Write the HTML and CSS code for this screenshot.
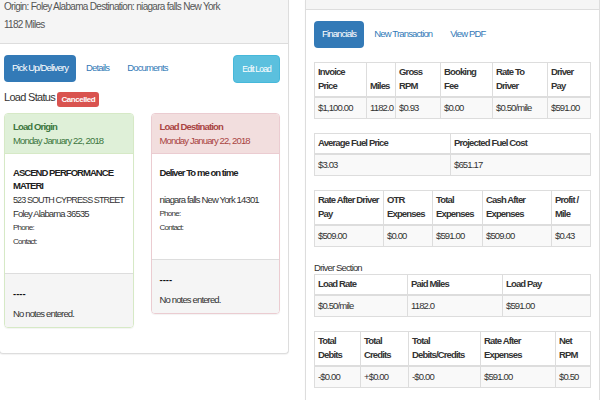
FILE: index.html
```html
<!DOCTYPE html>
<html lang="en">
<head>
<meta charset="utf-8">
<title>Load</title>
<link rel="stylesheet" href="styles.css">
</head>
<body>
<div class="page">
  <section class="panel load-panel">
    <div class="route">
      <p>Origin: Foley Alabama Destination: niagara falls New York</p>
      <p>1182 Miles</p>
    </div>
    <div class="load-body">
      <div class="toolbar">
        <ul class="pills">
          <li class="active"><a href="#">Pick Up/Delivery</a></li>
          <li><a href="#">Details</a></li>
          <li><a href="#">Documents</a></li>
        </ul>
        <button class="btn-edit" type="button">Edit Load</button>
      </div>
      <h4 class="status">Load Status <span class="badge">Cancelled</span></h4>
      <div class="stops">
        <div class="stop stop-origin">
          <div class="stop-heading">
            <strong>Load Origin</strong>
            <div>Monday January 22, 2018</div>
          </div>
          <div class="stop-body">
            <p class="stop-name">ASCEND PERFORMANCE MATERI</p>
            <p class="addr addr-caps">523 SOUTH CYPRESS STREET</p>
            <p class="addr">Foley Alabama 36535</p>
            <p class="small">Phone:</p>
            <p class="small">Contact:</p>
          </div>
          <div class="stop-footer">
            <p class="dashes">----</p>
            <p>No notes entered.</p>
          </div>
        </div>
        <div class="stop stop-dest">
          <div class="stop-heading">
            <strong>Load Destination</strong>
            <div>Monday January 22, 2018</div>
          </div>
          <div class="stop-body">
            <p class="stop-name">Deliver To me on time</p>
            <p class="addr">niagara falls New York 14301</p>
            <p class="small">Phone:</p>
            <p class="small">Contact:</p>
          </div>
          <div class="stop-footer">
            <p class="dashes">----</p>
            <p>No notes entered.</p>
          </div>
        </div>
      </div>
    </div>
  </section>

  <section class="panel fin-panel">
    <div class="fin-heading"></div>
    <div class="fin-body">
      <ul class="pills fin-pills">
        <li class="active"><a href="#">Financials</a></li>
        <li><a href="#">New Transaction</a></li>
        <li><a href="#">View PDF</a></li>
      </ul>

      <table class="grid">
        <colgroup><col class="w52"><col class="w29"><col class="w45"><col class="w52"><col class="w55"><col></colgroup>
        <thead><tr><th>Invoice Price</th><th>Miles</th><th>Gross RPM</th><th>Booking Fee</th><th>Rate To Driver</th><th>Driver Pay</th></tr></thead>
        <tbody><tr><td>$1,100.00</td><td>1182.0</td><td>$0.93</td><td>$0.00</td><td>$0.50/mile</td><td>$591.00</td></tr></tbody>
      </table>

      <table class="grid">
        <colgroup><col class="w136"><col></colgroup>
        <thead><tr><th>Average Fuel Price</th><th>Projected Fuel Cost</th></tr></thead>
        <tbody><tr><td>$3.03</td><td>$651.17</td></tr></tbody>
      </table>

      <table class="grid">
        <colgroup><col class="w69"><col class="w49"><col class="w50"><col class="w69"><col></colgroup>
        <thead><tr><th>Rate After Driver Pay</th><th>OTR Expenses</th><th>Total Expenses</th><th>Cash After Expenses</th><th>Profit / Mile</th></tr></thead>
        <tbody><tr><td>$509.00</td><td>$0.00</td><td>$591.00</td><td>$509.00</td><td>$0.43</td></tr></tbody>
      </table>

      <p class="section-label">Driver Section</p>
      <table class="grid">
        <colgroup><col class="w93"><col class="w95"><col></colgroup>
        <thead><tr><th>Load Rate</th><th>Paid Miles</th><th>Load Pay</th></tr></thead>
        <tbody><tr><td>$0.50/mile</td><td>1182.0</td><td>$591.00</td></tr></tbody>
      </table>

      <table class="grid">
        <colgroup><col class="w46"><col class="w48"><col class="w72"><col class="w75"><col></colgroup>
        <thead><tr><th>Total Debits</th><th>Total Credits</th><th>Total Debits/Credits</th><th>Rate After Expenses</th><th>Net RPM</th></tr></thead>
        <tbody><tr><td>-$0.00</td><td>+$0.00</td><td>-$0.00</td><td>$591.00</td><td>$0.50</td></tr></tbody>
      </table>
    </div>
  </section>
</div>
</body>
</html>
```

FILE: styles.css
```css
* { box-sizing: border-box; }
html, body { margin: 0; padding: 0; }
body {
  font-family: "Liberation Sans", Arial, sans-serif;
  font-size: 9.5px;
  line-height: 14px;
  letter-spacing: -0.85px;
  color: #333;
  background: #fff;
  overflow: hidden;
}
p { margin: 0; }

.page {
  display: flex;
  align-items: flex-start;
  gap: 16px;
  height: 400px;
  overflow: hidden;
}

.panel {
  background: #fff;
  border: 1px solid #ddd;
  border-top: none;
  box-shadow: 0 1px 1px rgba(0, 0, 0, 0.05);
}

/* left panel */
.load-panel {
  flex: none;
  width: 290px;
  margin-left: -1px;
  border-radius: 0 0 4px 4px;
}
.route {
  height: 46px;
  padding: 0 4px;
  background: #f5f5f5;
  border-bottom: 1px solid #ddd;
  color: #555;
  font-size: 10px;
  letter-spacing: -0.7px;
}
.route p { line-height: 18px; }
.route p:first-child { margin-top: -2px; }

.load-body { padding: 11px 8px 25px 4px; }

.toolbar {
  display: flex;
  justify-content: space-between;
  align-items: flex-start;
}
.pills {
  list-style: none;
  margin: 0;
  padding: 0;
  display: flex;
  gap: 2px;
}
.pills a {
  display: block;
  padding: 6px 8px 7px;
  line-height: 14px;
  border-radius: 4px;
  color: #337ab7;
  text-decoration: none;
}
.pills .active a { background: #337ab7; color: #fff; }

.btn-edit {
  font-family: inherit;
  font-size: 8.5px;
  letter-spacing: -0.8px;
  line-height: 14px;
  padding: 6px 8px;
  border: 1px solid #46b8da;
  background: #5bc0de;
  color: #fff;
  border-radius: 4px;
}

.status {
  margin: 6px 0 6px;
  font-size: 11px;
  line-height: 17px;
  font-weight: normal;
  letter-spacing: -0.7px;
}
.badge {
  display: inline-block;
  font-size: 8px;
  font-weight: bold;
  line-height: 11px;
  padding: 2px 4px;
  letter-spacing: -0.45px;
  background: #d9534f;
  color: #fff;
  border-radius: 3px;
  vertical-align: -1px;
}

.stops {
  display: grid;
  grid-template-columns: 1fr 1fr;
  column-gap: 17px;
  align-items: start;
}
.stop {
  border: 1px solid #ddd;
  border-radius: 4px;
  overflow: hidden;
  box-shadow: 0 1px 1px rgba(0, 0, 0, 0.05);
}
.stop-heading {
  padding: 6px 8px 5px;
  border-bottom: 1px solid transparent;
}
.stop-origin { border-color: #d6e9c6; }
.stop-origin .stop-heading { background: #dff0d8; color: #3c763d; border-bottom-color: #d6e9c6; }
.stop-dest { border-color: #ebccd1; }
.stop-dest .stop-heading { background: #f2dede; color: #a94442; border-bottom-color: #ebccd1; }

.stop-body { padding: 12px 8px 24px; }
.stop-name {
  min-height: 27px;
  line-height: 13px;
  font-weight: bold;
  letter-spacing: -0.95px;
  color: #222;
}
.addr { white-space: nowrap; }
.addr-caps { font-size: 9px; letter-spacing: -0.9px; }
.small { font-size: 8px; letter-spacing: -0.75px; }

.stop-footer {
  padding: 13px 8px 6px;
  background: #f5f5f5;
  border-top: 1px solid #ddd;
}
.dashes { font-weight: bold; color: #111; margin-bottom: 6px; letter-spacing: 0; }

/* right panel */
.fin-panel {
  flex: none;
  width: 295px;
}
.fin-heading {
  height: 10px;
  background: #f5f5f5;
  border-bottom: 1px solid #ddd;
}
.fin-body { padding: 11px 8px 8px; }
.fin-pills { margin-bottom: 14px; }

.grid {
  width: 100%;
  border-collapse: collapse;
  table-layout: fixed;
  margin-bottom: 14px;
}
.grid th, .grid td {
  border: 1px solid #ddd;
  padding: 3px;
  line-height: 14px;
  text-align: left;
  vertical-align: top;
}
.grid th {
  vertical-align: bottom;
  font-weight: bold;
  padding-top: 2px;
  border-bottom-width: 2px;
}
.grid tbody tr { background: #f9f9f9; }

.section-label { line-height: 13px; margin-top: 1px; }

.w29 { width: 29px; }
.w45 { width: 45px; }
.w46 { width: 46px; }
.w48 { width: 48px; }
.w49 { width: 49px; }
.w50 { width: 50px; }
.w52 { width: 52px; }
.w55 { width: 55px; }
.w69 { width: 69px; }
.w72 { width: 72px; }
.w75 { width: 75px; }
.w93 { width: 93px; }
.w95 { width: 95px; }
.w136 { width: 136px; }
```
